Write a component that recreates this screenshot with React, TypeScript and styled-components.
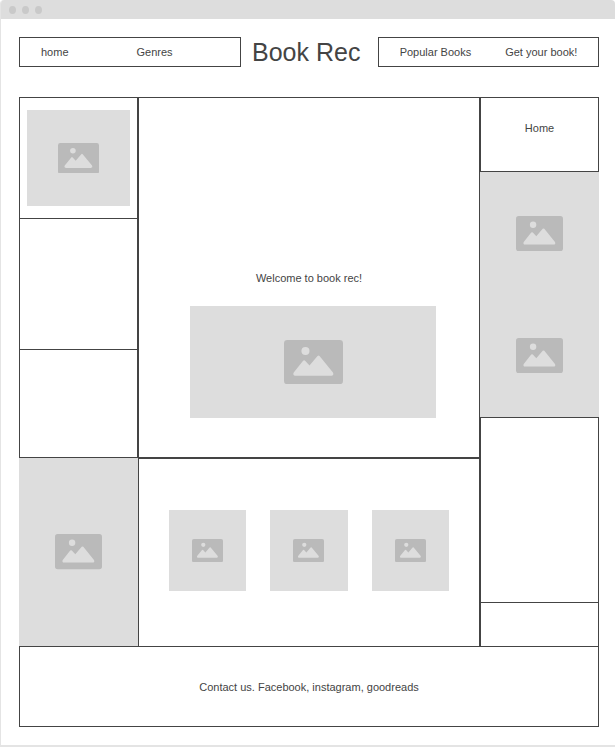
import React from "react";
import styled, { createGlobalStyle, css } from "styled-components";

const LINE = "1px solid #444";

const GlobalStyle = createGlobalStyle`
  *, *::before, *::after {
    box-sizing: border-box;
  }
  body {
    margin: 0;
    background: #fff;
    color: #444;
    font-family: "Liberation Sans", Arial, sans-serif;
    font-size: 11px;
    line-height: 14px;
  }
`;

const Frame = styled.div`
  border-left: 1px solid #e4e4e4;
  border-bottom: 2px solid #e4e4e4;
  border-top-left-radius: 4px;
  border-top-right-radius: 4px;
  overflow: hidden;
`;

const TitleBar = styled.div`
  display: flex;
  align-items: center;
  gap: 6px;
  height: 19px;
  padding-left: 8px;
  background: #ddd;
`;

const Dot = styled.span`
  width: 7px;
  height: 8px;
  border-radius: 50%;
  background: #c9c9c9;
`;

const Page = styled.div`
  padding: 18px 16px 18px 18px;
`;

const Header = styled.header`
  display: grid;
  grid-template-columns: 222fr 137fr 221fr;
  align-items: center;
  margin-bottom: 30px;
`;

const Nav = styled.nav<{ $gap: number; $centered?: boolean }>`
  display: flex;
  align-items: center;
  justify-content: ${({ $centered }) => ($centered ? "center" : "flex-start")};
  gap: ${({ $gap }) => $gap}px;
  min-height: 30px;
  padding: 0 ${({ $centered }) => ($centered ? 0 : 21)}px;
  border: ${LINE};
  white-space: nowrap;
`;

const TextLink = styled.a`
  color: inherit;
  text-decoration: none;
`;

const SiteTitle = styled.h1`
  margin: 0;
  padding-left: 11px;
  font-size: 25px;
  font-weight: 400;
  line-height: 30px;
  white-space: nowrap;
`;

const Columns = styled.div`
  display: grid;
  grid-template-columns: 119fr 342fr 119fr;
`;

const Column = styled.div`
  display: flex;
  flex-direction: column;
  min-width: 0;
`;

const Cell = styled.section<{ $height: number; $top?: boolean; $bottom?: boolean }>`
  display: flex;
  flex-direction: column;
  min-height: ${({ $height }) => $height}px;
  border-left: ${LINE};
  border-right: ${LINE};
  ${({ $top }) => $top && css`border-top: ${LINE};`}
  ${({ $bottom }) => $bottom && css`border-bottom: ${LINE};`}
`;

const CoverCell = styled(Cell)`
  padding: 12px 7px;
`;

const HomeCell = styled(Cell)`
  align-items: center;
  padding-top: 23px;
`;

const WelcomeCell = styled(Cell)`
  justify-content: flex-end;
  padding: 0 43px 39px 51px;
`;

const WelcomeText = styled.p`
  margin: 0 8px 21px 0;
  text-align: center;
`;

const Gallery = styled(Cell)`
  display: grid;
  grid-template-columns: repeat(3, 1fr);
  align-content: start;
  gap: 24px;
  padding: 51px 30px;
`;

const Placeholder = styled.div<{ $height: number; $icon: number }>`
  display: flex;
  align-items: center;
  justify-content: center;
  min-height: ${({ $height }) => $height}px;
  background: #ddd;

  svg {
    display: block;
    width: ${({ $icon }) => $icon}px;
    height: auto;
  }
`;

const PlaceholderStack = styled.div`
  display: grid;
  grid-template-rows: 1fr 1fr;
  min-height: 245px;
`;

const Footer = styled.footer`
  display: flex;
  align-items: center;
  justify-content: center;
  min-height: 81px;
  border: ${LINE};
`;

function Picture({ height, icon }: { height: number; icon: number }) {
  return (
    <Placeholder $height={height} $icon={icon}>
      <svg viewBox="0 0 176 132" role="img" aria-label="Image placeholder">
        <rect width="176" height="132" rx="10" fill="#bababa" />
        <circle cx="64" cy="33" r="12" fill="#ddd" />
        <path
          d="M29 97 L57 62 Q60 59 63 62 L76 76 L100 48 Q103 45 106 48 L146 97 Q150 106 141 107 H34 Q25 106 29 97 Z"
          fill="#ddd"
        />
      </svg>
    </Placeholder>
  );
}

export default function App() {
  return (
    <>
      <GlobalStyle />
      <Frame>
        <TitleBar>
          <Dot />
          <Dot />
          <Dot />
        </TitleBar>
        <Page>
          <Header>
            <Nav $gap={68} aria-label="Main">
              <TextLink href="#home">home</TextLink>
              <TextLink href="#genres">Genres</TextLink>
            </Nav>
            <SiteTitle>Book Rec</SiteTitle>
            <Nav $gap={34} $centered aria-label="Books">
              <TextLink href="#popular">Popular Books</TextLink>
              <TextLink href="#get">Get your book!</TextLink>
            </Nav>
          </Header>
          <Columns>
            <Column>
              <CoverCell $height={122} $top $bottom>
                <Picture height={96} icon={41} />
              </CoverCell>
              <Cell $height={131} $bottom />
              <Cell $height={108} $bottom />
              <Picture height={188} icon={47} />
            </Column>
            <Column as="main">
              <WelcomeCell $height={361} $top $bottom>
                <WelcomeText>Welcome to book rec!</WelcomeText>
                <Picture height={112} icon={59} />
              </WelcomeCell>
              <Gallery $height={188} $top>
                <Picture height={81} icon={31} />
                <Picture height={81} icon={31} />
                <Picture height={81} icon={31} />
              </Gallery>
            </Column>
            <Column>
              <HomeCell $height={75} $top $bottom>
                <TextLink href="#home">Home</TextLink>
              </HomeCell>
              <PlaceholderStack>
                <Picture height={122} icon={47} />
                <Picture height={122} icon={47} />
              </PlaceholderStack>
              <Cell $height={185} $top />
              <Cell $height={44} $top />
            </Column>
          </Columns>
          <Footer>Contact us. Facebook, instagram, goodreads</Footer>
        </Page>
      </Frame>
    </>
  );
}
